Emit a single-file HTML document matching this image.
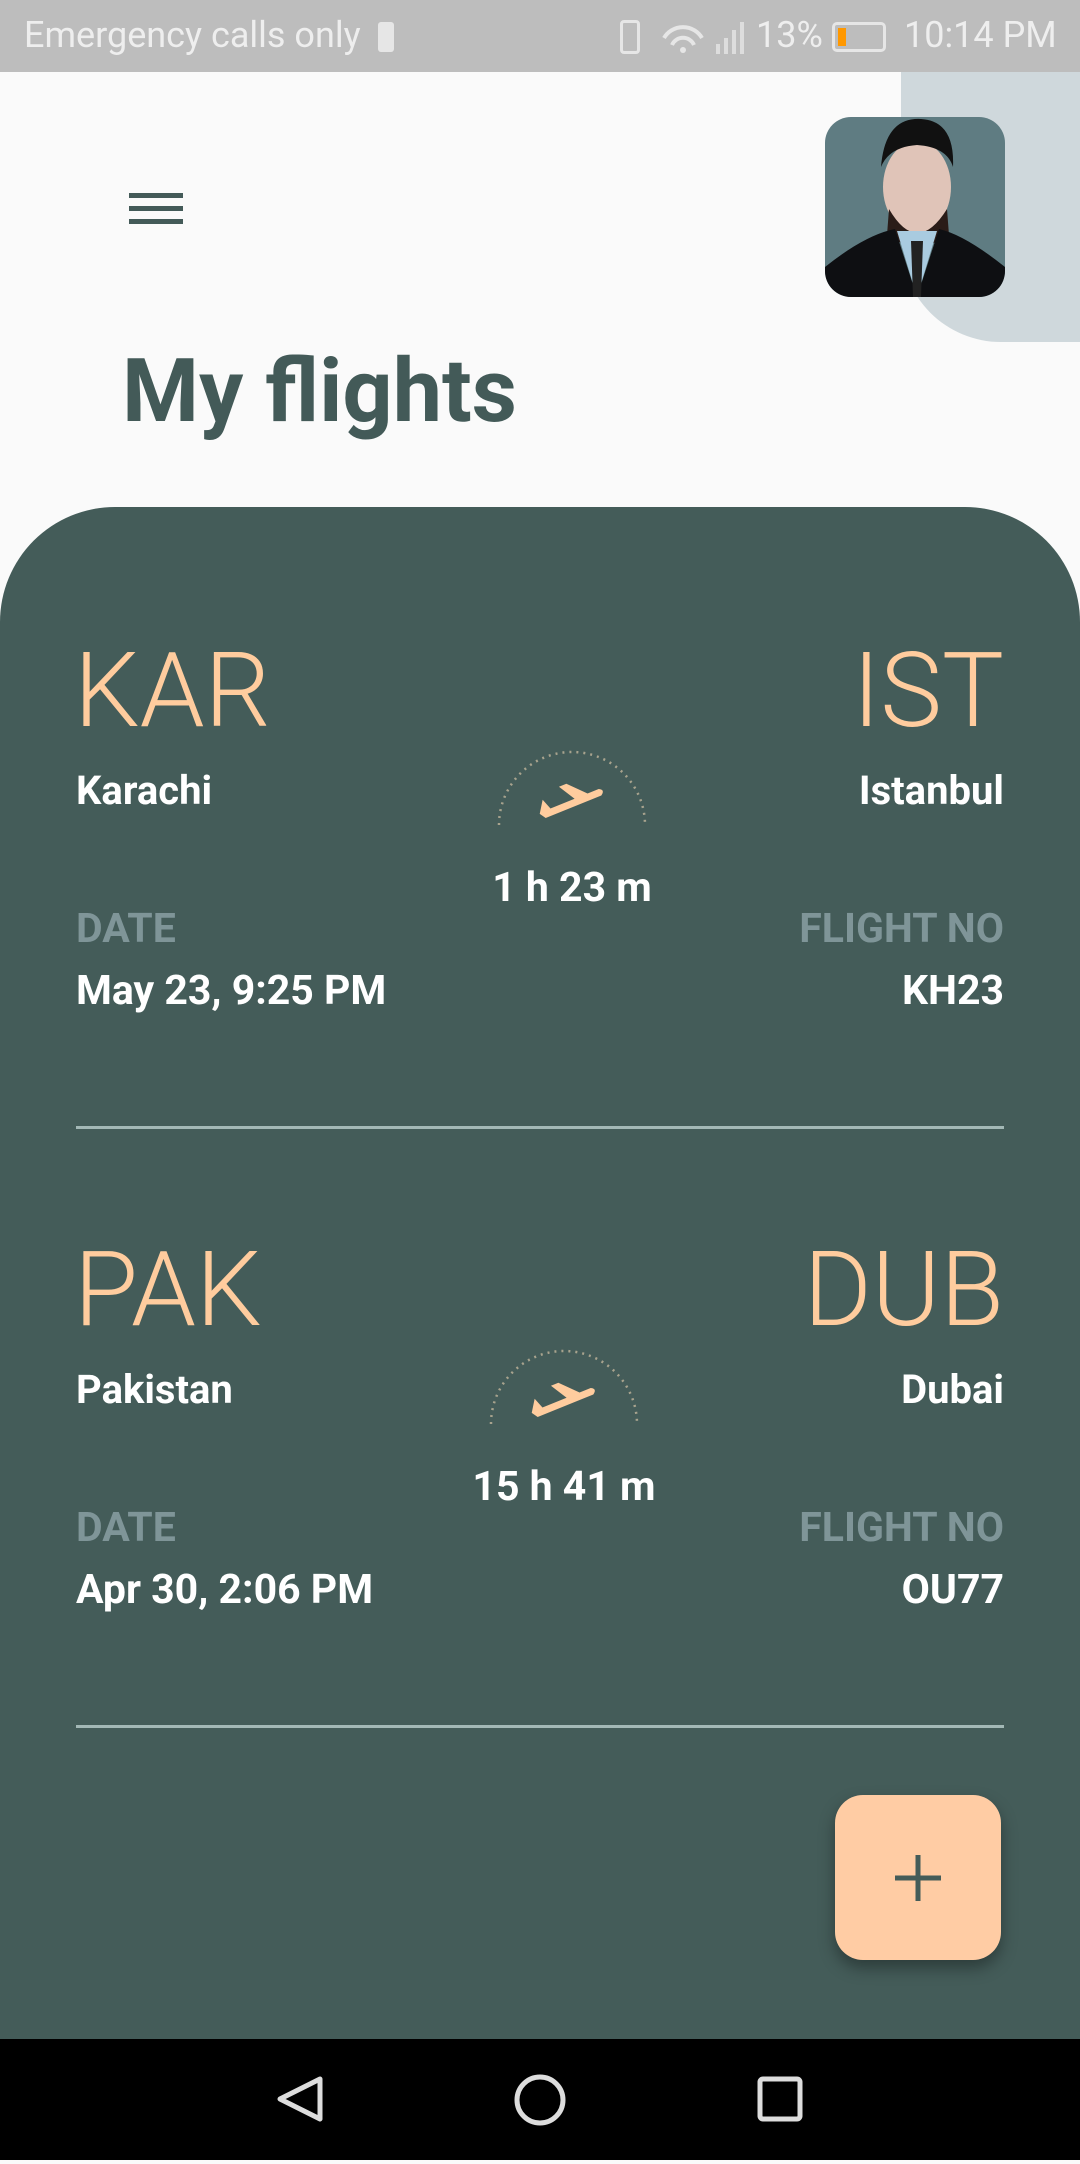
<!DOCTYPE html>
<html><head><meta charset="utf-8"><style>
*{margin:0;padding:0;box-sizing:border-box}
body{width:1080px;height:2160px;position:relative;overflow:hidden;background:#fafafa;font-family:"Roboto","Liberation Sans",sans-serif}
.abs{position:absolute}
.sb{left:0;top:0;width:1080px;height:72px;background:#bdbdbd;color:#eee;font-size:36px}
.blue{left:901px;top:72px;width:179px;height:270px;background:#cfd8dc;border-bottom-left-radius:100px}
.av{left:825px;top:117px;width:180px;height:180px;border-radius:26px;overflow:hidden;background:#5f7c82}
.ham{left:129px;width:54px;height:5px;background:#435a58}
.title{left:122px;top:340px;font-size:88px;font-weight:bold;color:#435a58}
.panel{left:0;top:507px;width:1080px;height:1540px;background:#445c59;border-radius:115px 115px 0 0}
.code{font-size:104px;font-weight:300;color:#ffcc9e;line-height:1}
.city{font-size:40px;font-weight:bold;color:#fff}
.lbl{font-size:41px;color:#7f9598;font-weight:bold}
.val{font-size:41px;font-weight:bold;color:#fff}
.dur{font-size:41px;font-weight:bold;color:#fff;text-align:center;width:300px}
.div{left:76px;width:928px;height:3px;background:#a3b8b6}
.fab{left:835px;top:1795px;width:166px;height:165px;border-radius:28px;background:#ffcca4;box-shadow:0 8px 16px rgba(0,0,0,.35)}
.nav{left:0;top:2039px;width:1080px;height:121px;background:#000}
</style></head><body>
<div class="abs sb">
<span class="abs" style="left:24px;top:14px">Emergency calls only</span>
<div class="abs" style="left:378px;top:22px;width:16px;height:30px;background:#e6e6e6;border-radius:3px"></div>
<div class="abs" style="left:620px;top:20px;width:20px;height:34px;border:3px solid #e6e6e6;border-radius:4px"></div>
<svg class="abs" style="left:660px;top:18px" width="46" height="36"><path d="M4 20 A22 22 0 0 1 42 20" stroke="#e6e6e6" stroke-width="4" fill="none"/><path d="M12 27 A12 12 0 0 1 34 27" stroke="#e6e6e6" stroke-width="4" fill="none"/><circle cx="23" cy="32" r="3" fill="#e6e6e6"/></svg>
<svg class="abs" style="left:714px;top:14px" width="38" height="42"><rect x="2" y="30" width="4" height="10" fill="#ddd"/><rect x="10" y="24" width="4" height="16" fill="#ddd"/><rect x="18" y="16" width="4" height="24" fill="#ddd"/><rect x="26" y="8" width="4" height="32" fill="#ddd"/></svg>
<span class="abs" style="left:756px;top:14px">13%</span>
<div class="abs" style="left:832px;top:22px;width:54px;height:30px;border:3px solid #e6e6e6;border-radius:5px"><div style="width:8px;height:18px;margin:3px;background:#ff9800"></div></div>
<span class="abs" style="left:904px;top:14px">10:14 PM</span>
</div>
<div class="abs blue"></div>
<div class="abs av">
<svg width="180" height="180"><ellipse cx="92" cy="70" rx="34" ry="46" fill="#e0c4b8"/><path d="M56 50 Q60 0 96 2 Q130 4 128 50 Q122 30 92 28 Q64 30 56 50Z" fill="#111"/><path d="M64 92 Q92 140 122 92 L124 118 Q92 140 62 118Z" fill="#2a1c18"/><path d="M0 150 Q40 118 70 112 L92 180 L0 180Z M180 150 Q140 118 114 112 L92 180 L180 180Z" fill="#0e0f12"/><path d="M72 114 L92 180 L112 114Z" fill="#a9cbe0"/><path d="M86 124 L98 124 L96 180 L88 180Z" fill="#222"/></svg>
</div>
<div class="abs ham" style="top:193px"></div>
<div class="abs ham" style="top:206px"></div>
<div class="abs ham" style="top:219px"></div>
<div class="abs title">My flights</div>
<div class="abs panel"></div>

<!-- card 1 -->
<div class="abs code" style="left:74px;top:640px">KAR</div>
<div class="abs code" style="right:76px;top:640px">IST</div>
<div class="abs city" style="left:76px;top:767px">Karachi</div>
<div class="abs city" style="right:76px;top:767px">Istanbul</div>
<svg class="abs" style="left:490px;top:745px" width="164" height="90"><path d="M9 80 A73 73 0 0 1 155 80" stroke="#a8a38e" stroke-width="2.5" stroke-dasharray="2 5" fill="none"/><g transform="translate(82,58) rotate(-22)"><path d="M-34 -2 L-26 -14 L-22 -3 L4 -3 L-6 -20 L2 -20 L18 -3 L30 -3 Q36 0 30 4 L-30 4 Z" fill="#ffcc9e"/></g></svg>
<div class="abs dur" style="left:422px;top:864px">1 h 23 m</div>
<div class="abs lbl" style="left:76px;top:905px">DATE</div>
<div class="abs lbl" style="right:76px;top:905px">FLIGHT NO</div>
<div class="abs val" style="left:76px;top:967px">May 23, 9:25 PM</div>
<div class="abs val" style="right:76px;top:967px">KH23</div>
<div class="abs div" style="top:1126px"></div>

<!-- card 2 -->
<div class="abs code" style="left:74px;top:1239px">PAK</div>
<div class="abs code" style="right:76px;top:1239px">DUB</div>
<div class="abs city" style="left:76px;top:1366px">Pakistan</div>
<div class="abs city" style="right:76px;top:1366px">Dubai</div>
<svg class="abs" style="left:482px;top:1344px" width="164" height="90"><path d="M9 80 A73 73 0 0 1 155 80" stroke="#a8a38e" stroke-width="2.5" stroke-dasharray="2 5" fill="none"/><g transform="translate(82,58) rotate(-22)"><path d="M-34 -2 L-26 -14 L-22 -3 L4 -3 L-6 -20 L2 -20 L18 -3 L30 -3 Q36 0 30 4 L-30 4 Z" fill="#ffcc9e"/></g></svg>
<div class="abs dur" style="left:414px;top:1463px">15 h 41 m</div>
<div class="abs lbl" style="left:76px;top:1504px">DATE</div>
<div class="abs lbl" style="right:76px;top:1504px">FLIGHT NO</div>
<div class="abs val" style="left:76px;top:1566px">Apr 30, 2:06 PM</div>
<div class="abs val" style="right:76px;top:1566px">OU77</div>
<div class="abs div" style="top:1725px"></div>

<div class="abs fab"><svg width="166" height="165"><path d="M83 60 V106 M60 83 H106" stroke="#445c59" stroke-width="5"/></svg></div>
<div class="abs nav">
<svg width="1080" height="121"><path d="M320 40 L280 60 L320 80 Z" stroke="#ddd" stroke-width="5" fill="none" stroke-linejoin="round"/><circle cx="540" cy="61" r="23" stroke="#ddd" stroke-width="5" fill="none"/><rect x="760" y="40" width="40" height="40" rx="3" stroke="#ddd" stroke-width="5" fill="none"/></svg>
</div>
</body></html>
